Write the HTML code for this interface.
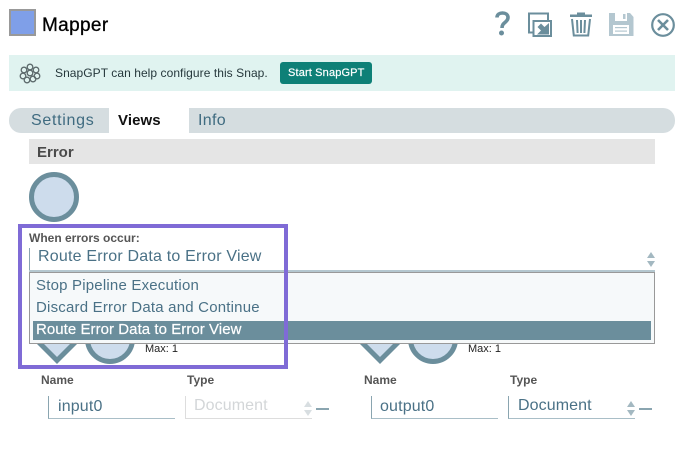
<!DOCTYPE html>
<html><head><meta charset="utf-8">
<style>
html,body{margin:0;padding:0;background:#fff}
body{width:678px;height:449px;position:relative;overflow:hidden;font-family:"Liberation Sans",sans-serif}
.a{position:absolute}
.t{position:absolute;white-space:nowrap;line-height:1}
</style></head><body>
<div class="a" style="left:9px;top:9px;width:23px;height:23px;background:#7f9fe8;border:2px solid #999"></div>
<div class="t" style="left:42px;top:16px;font-size:19px;color:#000;letter-spacing:.35px;-webkit-text-stroke:.3px #000">Mapper</div>

<svg class="a" style="left:480px;top:0" width="198" height="50" viewBox="0 0 198 50">
<path d="M17 17.500c0-6 11-6 11 0 0 5-6 4.500-6 10.500" fill="none" stroke="#6b8e9c" stroke-width="3.600"/>
<circle cx="21.500" cy="33" r="2.500" fill="#6b8e9c"/>
<rect x="49" y="13.500" width="19" height="19" fill="none" stroke="#6b8e9c" stroke-width="2"/>
<rect x="53.500" y="21" width="17.500" height="15" fill="#fff" stroke="#6b8e9c" stroke-width="2"/>
<path d="M69 23V34.500H57l4-4-3.500-3.500 3.500-3.500 3.500 3.500z" fill="#6b8e9c"/>
<g fill="none" stroke="#6b8e9c" stroke-width="2"><path d="M92 19l1.800 16.500h14.400L110 19"/><path d="M97 20l.6 13M101 20v13M105 20l-.6 13"/></g>
<rect x="90" y="14.500" width="22" height="2.500" fill="#6b8e9c"/><rect x="97" y="12.500" width="8" height="3" fill="#6b8e9c"/>
<path d="M129 13h21l3.500 4v19H129z" fill="#b4c7d0"/>
<rect x="135" y="13" width="12" height="8" fill="#fff"/><rect x="143" y="14" width="2.500" height="5" fill="#b4c7d0"/>
<rect x="133" y="25" width="16" height="9" fill="#fff"/><rect x="135" y="27" width="12" height="1.200" fill="#b4c7d0"/><rect x="135" y="30.500" width="12" height="1.200" fill="#b4c7d0"/>
<circle cx="183" cy="25" r="10.800" fill="none" stroke="#6b8e9c" stroke-width="2.200"/>
<path d="M178 20l10 10M188 20l-10 10" stroke="#6b8e9c" stroke-width="2.600" fill="none"/>
</svg>

<div class="a" style="left:9px;top:55px;width:666px;height:36px;background:#e0f3f0"></div>
<svg class="a" style="left:19px;top:61px" width="22" height="24" viewBox="0 0 22 24" fill="none" stroke="#5c6a6c" stroke-width="1.300">
<circle cx="11" cy="6" r="2.800"/><circle cx="5" cy="9" r="2.800"/><circle cx="17" cy="9" r="2.800"/><circle cx="11" cy="12" r="2.800"/><circle cx="4" cy="15" r="2.800"/><circle cx="18" cy="15" r="2.800"/><circle cx="8" cy="19" r="2.800"/><circle cx="14" cy="18" r="2.800"/>
</svg>
<div class="t" style="left:55px;top:67px;font-size:12px;color:#26383c;letter-spacing:.06px">SnapGPT can help configure this Snap.</div>
<div class="a" style="left:280px;top:62px;width:92px;height:22px;background:#0e8077;border-radius:3px"></div>
<div class="t" style="left:288px;top:68px;font-size:11px;color:#fff;letter-spacing:.15px;-webkit-text-stroke:.2px #fff">Start SnapGPT</div>

<div class="a" style="left:9px;top:108px;width:666px;height:25px;background:#d5dde0;border-radius:12px"></div>
<div class="a" style="left:109px;top:108px;width:80px;height:25px;background:#fff"></div>
<div class="t" style="left:31px;top:113px;font-size:16px;color:#3f6b80;letter-spacing:.7px">Settings</div>
<div class="t" style="left:118px;top:113px;font-size:15px;font-weight:bold;color:#111;letter-spacing:.1px">Views</div>
<div class="t" style="left:198px;top:113px;font-size:16px;color:#3f6b80;letter-spacing:.3px">Info</div>

<div class="a" style="left:29px;top:139px;width:626px;height:25px;background:#e5e5e5"></div>
<div class="t" style="left:37px;top:145px;font-size:15px;font-weight:bold;color:#4a4a4a">Error</div>
<div class="a" style="left:29px;top:172px;width:40px;height:40px;background:#cddcec;border:5px solid #6b8e9c;border-radius:50%"></div>

<div class="t" style="left:29px;top:232px;font-size:12px;font-weight:bold;color:#555;letter-spacing:0">When errors occur:</div>
<div class="a" style="left:29px;top:248px;width:1px;height:23px;background:#8aa5b0"></div>
<div class="a" style="left:29px;top:270px;width:626px;height:2px;background:#b4c7cf"></div>
<div class="t" style="left:38px;top:249px;font-size:16px;color:#4a7186;letter-spacing:.2px">Route Error Data to Error View</div>
<svg class="a" style="left:646px;top:252px" width="10" height="16"><path d="M5 0l4 6H1z" fill="#a3b8c1"/><path d="M5 15L1 9h8z" fill="#a3b8c1"/></svg>

<svg class="a" style="left:30px;top:330px" width="110" height="40" fill="#cddcec" stroke="#6b8e9c" stroke-width="5">
<path d="M1 4.500l26 26 26-26"/><circle cx="80" cy="9" r="22.500"/>
</svg>
<svg class="a" style="left:353px;top:330px" width="110" height="40" fill="#cddcec" stroke="#6b8e9c" stroke-width="5">
<path d="M1 4.500l26 26 26-26"/><circle cx="80" cy="9" r="22.500"/>
</svg>
<div class="t" style="left:145px;top:344px;font-size:11px;color:#222">Max: 1</div>
<div class="t" style="left:468px;top:344px;font-size:11px;color:#222">Max: 1</div>

<div class="a" style="left:29px;top:272px;width:624px;height:70px;background:#f6f9fa;border:1px solid #999"></div>
<div class="t" style="left:36px;top:278px;font-size:15px;color:#4a7186;letter-spacing:.2px">Stop Pipeline Execution</div>
<div class="t" style="left:36px;top:300px;font-size:15px;color:#4a7186;letter-spacing:.2px">Discard Error Data and Continue</div>
<div class="a" style="left:33px;top:321px;width:618px;height:19px;background:#6b8e9c"></div>
<div class="t" style="left:36px;top:322px;font-size:15px;color:#fff;letter-spacing:.05px;-webkit-text-stroke:.2px #fff">Route Error Data to Error View</div>

<div class="a" style="left:18px;top:224px;width:262px;height:137px;border:4px solid #7f6bd6"></div>

<div class="t" style="left:41px;top:374px;font-size:12px;font-weight:bold;color:#555">Name</div>
<div class="t" style="left:187px;top:374px;font-size:12px;font-weight:bold;color:#555">Type</div>
<div class="t" style="left:364px;top:374px;font-size:12px;font-weight:bold;color:#555">Name</div>
<div class="t" style="left:510px;top:374px;font-size:12px;font-weight:bold;color:#555">Type</div>

<div class="a" style="left:48px;top:396px;width:126px;height:22px;border-left:1px solid #8aa5b0;border-bottom:1px solid #a9bec7"></div>
<div class="t" style="left:58px;top:399px;font-size:16px;color:#4a7186;letter-spacing:.15px">input0</div>
<div class="a" style="left:185px;top:396px;width:126px;height:22px;border-left:1px solid #ddd;border-bottom:1px solid #ddd"></div>
<div class="t" style="left:194px;top:398px;font-size:16px;color:#d3d6d8;letter-spacing:.1px">Document</div>
<svg class="a" style="left:303px;top:401px" width="10" height="16"><path d="M5 0l4 6H1z" fill="#d8dee1"/><path d="M5 15L1 9h8z" fill="#d8dee1"/></svg>
<div class="a" style="left:316px;top:408px;width:13px;height:2px;background:#8aa5b0"></div>

<div class="a" style="left:371px;top:396px;width:126px;height:22px;border-left:1px solid #8aa5b0;border-bottom:1px solid #a9bec7"></div>
<div class="t" style="left:380px;top:399px;font-size:16px;color:#4a7186;letter-spacing:.15px">output0</div>
<div class="a" style="left:508px;top:396px;width:126px;height:22px;border-left:1px solid #8aa5b0;border-bottom:1px solid #a9bec7"></div>
<div class="t" style="left:518px;top:398px;font-size:16px;color:#4a7186;letter-spacing:.1px">Document</div>
<svg class="a" style="left:626px;top:401px" width="10" height="16"><path d="M5 0l4 6H1z" fill="#a3b8c1"/><path d="M5 15L1 9h8z" fill="#a3b8c1"/></svg>
<div class="a" style="left:639px;top:408px;width:13px;height:2px;background:#8aa5b0"></div>
</body></html>
